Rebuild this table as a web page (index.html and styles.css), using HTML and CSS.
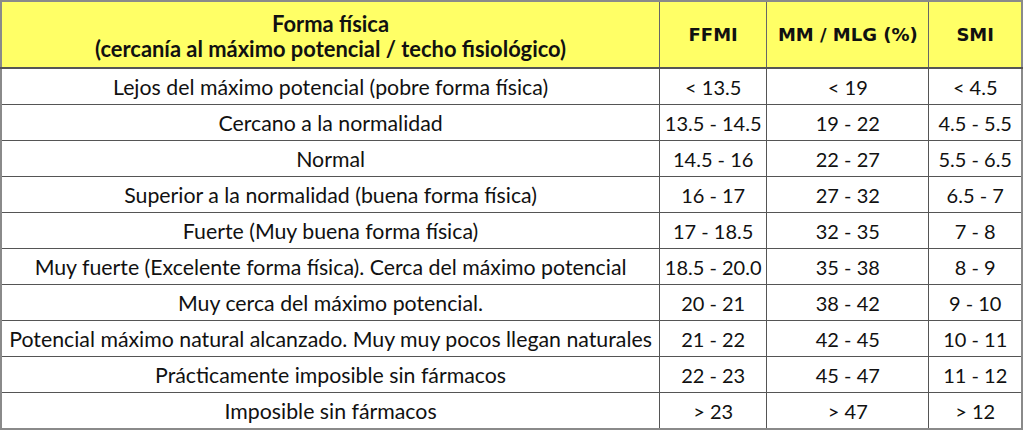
FILE: index.html
```html
<!DOCTYPE html>
<html lang="es">
<head>
<meta charset="utf-8">
<link rel="stylesheet" href="styles.css">
</head>
<body>
<table class="fit">
  <colgroup>
    <col class="c1"><col class="c2"><col class="c3"><col class="c4">
  </colgroup>
  <thead>
    <tr>
      <th class="lead">Forma física<br>(cercanía al máximo potencial / techo fisiológico)</th>
      <th>FFMI</th>
      <th>MM / MLG (%)</th>
      <th>SMI</th>
    </tr>
  </thead>
  <tbody>
    <tr><td class="lead">Lejos del máximo potencial (pobre forma física)</td><td>&lt; 13.5</td><td>&lt; 19</td><td>&lt; 4.5</td></tr>
    <tr><td class="lead">Cercano a la normalidad</td><td>13.5 - 14.5</td><td>19 - 22</td><td>4.5 - 5.5</td></tr>
    <tr><td class="lead">Normal</td><td>14.5 - 16</td><td>22 - 27</td><td>5.5 - 6.5</td></tr>
    <tr><td class="lead">Superior a la normalidad (buena forma física)</td><td>16 - 17</td><td>27 - 32</td><td>6.5 - 7</td></tr>
    <tr><td class="lead">Fuerte (Muy buena forma física)</td><td>17 - 18.5</td><td>32 - 35</td><td>7 - 8</td></tr>
    <tr><td class="lead">Muy fuerte (Excelente forma física). Cerca del máximo potencial</td><td>18.5 - 20.0</td><td>35 - 38</td><td>8 - 9</td></tr>
    <tr><td class="lead">Muy cerca del máximo potencial.</td><td>20 - 21</td><td>38 - 42</td><td>9 - 10</td></tr>
    <tr><td class="lead">Potencial máximo natural alcanzado. Muy muy pocos llegan naturales</td><td>21 - 22</td><td>42 - 45</td><td>10 - 11</td></tr>
    <tr><td class="lead">Prácticamente imposible sin fármacos</td><td>22 - 23</td><td>45 - 47</td><td>11 - 12</td></tr>
    <tr><td class="lead">Imposible sin fármacos</td><td>&gt; 23</td><td>&gt; 47</td><td>&gt; 12</td></tr>
  </tbody>
</table>
</body>
</html>
```
FILE: styles.css
```css
html, body {
  margin: 0;
  padding: 0;
  background: #ffffff;
}
.fit {
  border-collapse: collapse;
  table-layout: fixed;
  width: 1023px;
  border: 2px solid #8a8a8a;
  color: #111111;
}
.c1 { width: 658px; }
.c2 { width: 107px; }
.c3 { width: 162px; }
.c4 { width: 93px; }
.fit th {
  background: #ffff66;
  font-family: "DejaVu Sans", sans-serif;
  font-weight: bold;
  font-size: 18px;
  line-height: 25px;
  height: 65px;
  padding: 0;
  border: 1px solid #666666;
  border-bottom: 2px solid #555555;
  text-align: center;
  vertical-align: middle;
}
.fit th.lead {
  font-family: Lato, "Liberation Sans", sans-serif;
  font-weight: 700;
  font-size: 21.9px;
  padding-top: 2px;
  height: 63px;
}
.fit td {
  font-family: Lato, "Liberation Sans", sans-serif;
  font-size: 20px;
  height: 35px;
  padding: 0;
  border: 1px solid #555555;
  text-align: center;
  vertical-align: middle;
  white-space: nowrap;
}
.fit td.lead {
  font-size: 21.3px;
}
```
